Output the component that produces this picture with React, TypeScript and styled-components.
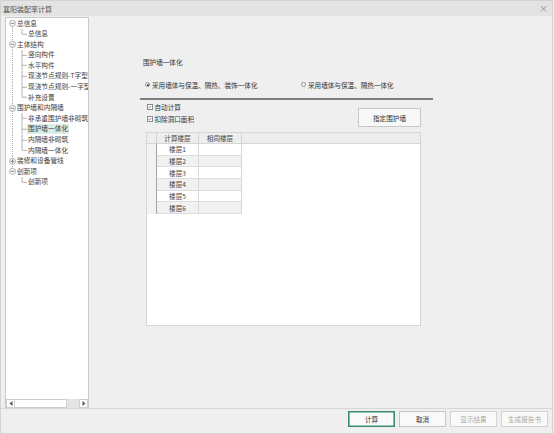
import React from 'react';
import styled, { createGlobalStyle } from 'styled-components';

const Global = createGlobalStyle`
  html, body { margin: 0; padding: 0; background: #efefef; }
  body { font-family: "Noto Sans CJK SC", "Noto Sans", sans-serif; }
  * { box-sizing: border-box; }
`;

const FONT = 6.6;
const ROW_H = 10.6;

const Window = styled.div`
  width: 553px;
  height: 434px;
  display: flex;
  flex-direction: column;
  background: #efefef;
  border: 1px solid #d3d3d3;
  color: #333;
  font-size: ${FONT}px;
  overflow: hidden;
`;

const TitleBar = styled.div`
  height: 15px;
  flex: none;
  display: flex;
  align-items: center;
  justify-content: space-between;
  padding: 0 4px 0 2px;
  background: #e3e3e3;
  color: #555;
  font-size: 7px;
`;

const CloseGlyph = styled.span`
  font-size: 9px;
  color: #8a8a8a;
  line-height: 1;
`;

const Body = styled.div`
  height: 392px;
  flex: none;
  display: flex;
`;

const TreePanel = styled.div`
  margin: 1px 0 0 4px;
  width: 84px;
  height: 391px;
  background: #fff;
  border: 1px solid #cacaca;
  border-bottom: none;
  display: flex;
  flex-direction: column;
`;

const TreeList = styled.div`
  flex: 1;
  overflow: hidden;
`;

const TreeRow = styled.div`
  height: ${ROW_H}px;
  display: flex;
  align-items: center;
  white-space: nowrap;
  color: #404040;
  font-size: 6.7px;
`;

const TreeLabel = styled.span<{ $selected?: boolean }>`
  line-height: ${ROW_H - 1}px;
  padding: 0 1px;
  margin-left: -1px;
  background: ${(p) => (p.$selected ? '#d8eee7' : 'transparent')};
`;

const HScroll = styled.div`
  height: 9px;
  flex: none;
  display: flex;
`;

const ScrollBtn = styled.div`
  width: 9px;
  height: 9px;
  border: 1px solid #cdcdcd;
  background: #fff;
  display: flex;
  align-items: center;
  justify-content: center;
`;

const ScrollThumb = styled.div`
  width: 52px;
  height: 9px;
  border: 1px solid #cdcdcd;
  border-left: none;
  background: #fff;
`;

const ScrollTrack = styled.div`
  flex: 1;
  background: #e4e4e4;
`;

const MainArea = styled.div`
  flex: 1;
  padding: 42px 0 0 51px;
`;

const Content = styled.div`
  width: 294px;
  display: flex;
  flex-direction: column;
`;

const SectionTitle = styled.div`
  line-height: 9px;
  margin-left: 3px;
`;

const RadioRow = styled.div`
  margin-top: 13px;
  height: 9px;
  display: flex;
  align-items: center;
  padding-left: 5px;
`;

const RadioItem = styled.label<{ $w?: number }>`
  display: flex;
  align-items: center;
  gap: 2px;
  width: ${(p) => (p.$w ? `${p.$w}px` : 'auto')};
  white-space: nowrap;
`;

const RadioCircle = styled.span<{ $on?: boolean }>`
  width: 5px;
  height: 5px;
  border-radius: 50%;
  border: 0.7px solid #8c8c8c;
  background: #fff;
  display: flex;
  align-items: center;
  justify-content: center;
  &::after {
    content: '';
    width: 2px;
    height: 2px;
    border-radius: 50%;
    background: ${(p) => (p.$on ? '#333' : 'transparent')};
  }
`;

const Separator = styled.div`
  margin-top: 9px;
  height: 2px;
  width: 293px;
  background: #7d7d7d;
`;

const Lower = styled.div`
  margin-left: 6px;
  width: 275px;
  display: flex;
  flex-direction: column;
`;

const ControlsRow = styled.div`
  padding-top: 1px;
  display: flex;
  justify-content: space-between;
  align-items: flex-start;
`;

const CheckCol = styled.div`
  display: flex;
  flex-direction: column;
`;

const CheckRow = styled.label`
  height: 12px;
  display: flex;
  align-items: center;
  gap: 2px;
  padding-left: 1px;
  white-space: nowrap;
`;

const CheckBox = styled.span`
  width: 5.5px;
  height: 5.5px;
  border: 0.7px solid #8c8c8c;
  background: #fff;
  display: flex;
  align-items: center;
  justify-content: center;
`;

const AssignButton = styled.div`
  margin-top: 7px;
  width: 63px;
  height: 19px;
  border: 1px solid #c8c8c8;
  background: #f8f8f8;
  display: flex;
  align-items: center;
  justify-content: center;
`;

const Grid = styled.div`
  margin-top: 5px;
  height: 194px;
  background: #fff;
  border: 1px solid #d6d6d6;
  display: flex;
  flex-direction: column;
`;

const GridHeader = styled.div`
  height: 11px;
  flex: none;
  display: flex;
  background: #eeeeee;
  border-bottom: 1px solid #d6d6d6;
`;

const Corner = styled.div`
  width: 10px;
  border-right: 1px solid #d2d2d2;
`;

const HeaderCell = styled.div<{ $w: number }>`
  width: ${(p) => p.$w}px;
  line-height: 10px;
  text-align: center;
  border-right: 1px solid #d2d2d2;
  color: #444;
`;

const GridRow = styled.div`
  height: 11.7px;
  display: flex;
`;

const RowHead = styled.div`
  width: 10px;
  background: #f2f2f2;
  border-right: 1px solid #a4a4a4;
`;

const Cell = styled.div<{ $w: number; $alt: boolean }>`
  width: ${(p) => p.$w}px;
  background: ${(p) => (p.$alt ? '#f1f1f1' : '#fff')};
  border-right: 1px solid #d8d8d8;
  border-bottom: 1px solid #dcdcdc;
  display: flex;
  align-items: center;
  justify-content: center;
  color: #444;
`;

const Footer = styled.div`
  flex: 1;
  border-top: 1px solid #d6d6d6;
  display: flex;
  justify-content: flex-end;
  gap: 4px;
  padding: 2px 4px 0 0;
`;

const FooterButton = styled.div<{ $primary?: boolean; $disabled?: boolean }>`
  width: 47px;
  height: 16px;
  background: #f9f9f9;
  border: 1px solid ${(p) => (p.$primary ? '#3b8b7b' : p.$disabled ? '#d3d3d3' : '#c6c6c6')};
  box-shadow: ${(p) => (p.$primary ? 'inset 0 0 0 0.6px #3b8b7b' : 'none')};
  color: ${(p) => (p.$disabled ? '#a9a9a9' : '#333')};
  display: flex;
  align-items: center;
  justify-content: center;
`;

type Node = {
  t: string;
  l: 0 | 1;
  exp?: 'minus' | 'plus';
  first?: boolean;
  last?: boolean;
  lastChild?: boolean;
  parentLast?: boolean;
  selected?: boolean;
};

const nodes: Node[] = [
  { t: '总信息', l: 0, exp: 'minus', first: true },
  { t: '总信息', l: 1, lastChild: true },
  { t: '主体结构', l: 0, exp: 'minus' },
  { t: '竖向构件', l: 1 },
  { t: '水平构件', l: 1 },
  { t: '现浇节点规则-T字型', l: 1 },
  { t: '现浇节点规则-一字型', l: 1 },
  { t: '补充设置', l: 1, lastChild: true },
  { t: '围护墙和内隔墙', l: 0, exp: 'minus' },
  { t: '非承重围护墙非砌筑', l: 1 },
  { t: '围护墙一体化', l: 1, selected: true },
  { t: '内隔墙非砌筑', l: 1 },
  { t: '内隔墙一体化', l: 1, lastChild: true },
  { t: '装修和设备管线', l: 0, exp: 'plus' },
  { t: '创新项', l: 0, exp: 'minus', last: true },
  { t: '创新项', l: 1, lastChild: true, parentLast: true },
];

const LINE = '#a9a9a9';

const Guide: React.FC<{ n: Node }> = ({ n }) => {
  const h = ROW_H;
  const m = h / 2;
  const dash = '1 1';
  if (n.l === 0) {
    return (
      <svg width={11} height={h} style={{ flex: 'none', display: 'block' }}>
        <line x1={6.5} x2={6.5} y1={n.first ? m : 0} y2={n.last ? m : h} stroke={LINE} strokeDasharray={dash} />
        <circle cx={6.5} cy={m} r={3} fill="#fafafa" stroke="#9d9d9d" strokeWidth={0.8} />
        <line x1={4.7} x2={8.3} y1={m} y2={m} stroke="#6a6a6a" strokeWidth={0.8} />
        {n.exp === 'plus' && <line x1={6.5} x2={6.5} y1={m - 1.8} y2={m + 1.8} stroke="#6a6a6a" strokeWidth={0.8} />}
      </svg>
    );
  }
  return (
    <svg width={22} height={h} style={{ flex: 'none', display: 'block' }}>
      {!n.parentLast && <line x1={6.5} x2={6.5} y1={0} y2={h} stroke={LINE} strokeDasharray={dash} />}
      <line x1={16} x2={16} y1={0} y2={n.lastChild ? m : h} stroke={LINE} strokeWidth={0.9} />
      <line x1={16} x2={21} y1={m} y2={m} stroke={LINE} strokeWidth={0.9} />
    </svg>
  );
};

const Arrow: React.FC<{ dir: 'l' | 'r' }> = ({ dir }) => (
  <svg width={4} height={5} viewBox="0 0 4 5">
    {dir === 'l' ? <polygon points="3.5,0 3.5,5 0.5,2.5" fill="#555" /> : <polygon points="0.5,0 0.5,5 3.5,2.5" fill="#555" />}
  </svg>
);

const Tick = () => (
  <svg width={4} height={4} viewBox="0 0 4 4">
    <polyline points="0.4,2 1.5,3.1 3.6,0.8" fill="none" stroke="#444" strokeWidth={0.7} />
  </svg>
);

const floors = ['楼层1', '楼层2', '楼层3', '楼层4', '楼层5', '楼层6'];

export default function App() {
  return (
    <>
      <Global />
      <Window>
        <TitleBar>
          <span>襄阳装配率计算</span>
          <CloseGlyph>×</CloseGlyph>
        </TitleBar>
        <Body>
          <TreePanel>
            <TreeList>
              {nodes.map((n, i) => (
                <TreeRow key={i}>
                  <Guide n={n} />
                  <TreeLabel $selected={n.selected}>{n.t}</TreeLabel>
                </TreeRow>
              ))}
            </TreeList>
            <HScroll>
              <ScrollBtn>
                <Arrow dir="l" />
              </ScrollBtn>
              <ScrollThumb />
              <ScrollTrack />
              <ScrollBtn>
                <Arrow dir="r" />
              </ScrollBtn>
            </HScroll>
          </TreePanel>
          <MainArea>
            <Content>
              <SectionTitle>围护墙一体化</SectionTitle>
              <RadioRow>
                <RadioItem $w={156}>
                  <RadioCircle $on />
                  <span>采用墙体与保温、隔热、装饰一体化</span>
                </RadioItem>
                <RadioItem>
                  <RadioCircle />
                  <span>采用墙体与保温、隔热一体化</span>
                </RadioItem>
              </RadioRow>
              <Separator />
              <Lower>
                <ControlsRow>
                  <CheckCol>
                    <CheckRow>
                      <CheckBox>
                        <Tick />
                      </CheckBox>
                      <span>自动计算</span>
                    </CheckRow>
                    <CheckRow>
                      <CheckBox>
                        <Tick />
                      </CheckBox>
                      <span>扣除洞口面积</span>
                    </CheckRow>
                  </CheckCol>
                  <AssignButton>指定围护墙</AssignButton>
                </ControlsRow>
                <Grid>
                  <GridHeader>
                    <Corner />
                    <HeaderCell $w={42}>计算楼层</HeaderCell>
                    <HeaderCell $w={43}>相同楼层</HeaderCell>
                  </GridHeader>
                  {floors.map((f, i) => (
                    <GridRow key={f}>
                      <RowHead />
                      <Cell $w={42} $alt={i % 2 === 1}>
                        {f}
                      </Cell>
                      <Cell $w={43} $alt={i % 2 === 1} />
                    </GridRow>
                  ))}
                </Grid>
              </Lower>
            </Content>
          </MainArea>
        </Body>
        <Footer>
          <FooterButton $primary>计算</FooterButton>
          <FooterButton>取消</FooterButton>
          <FooterButton $disabled>显示结果</FooterButton>
          <FooterButton $disabled>生成报告书</FooterButton>
        </Footer>
      </Window>
    </>
  );
}
